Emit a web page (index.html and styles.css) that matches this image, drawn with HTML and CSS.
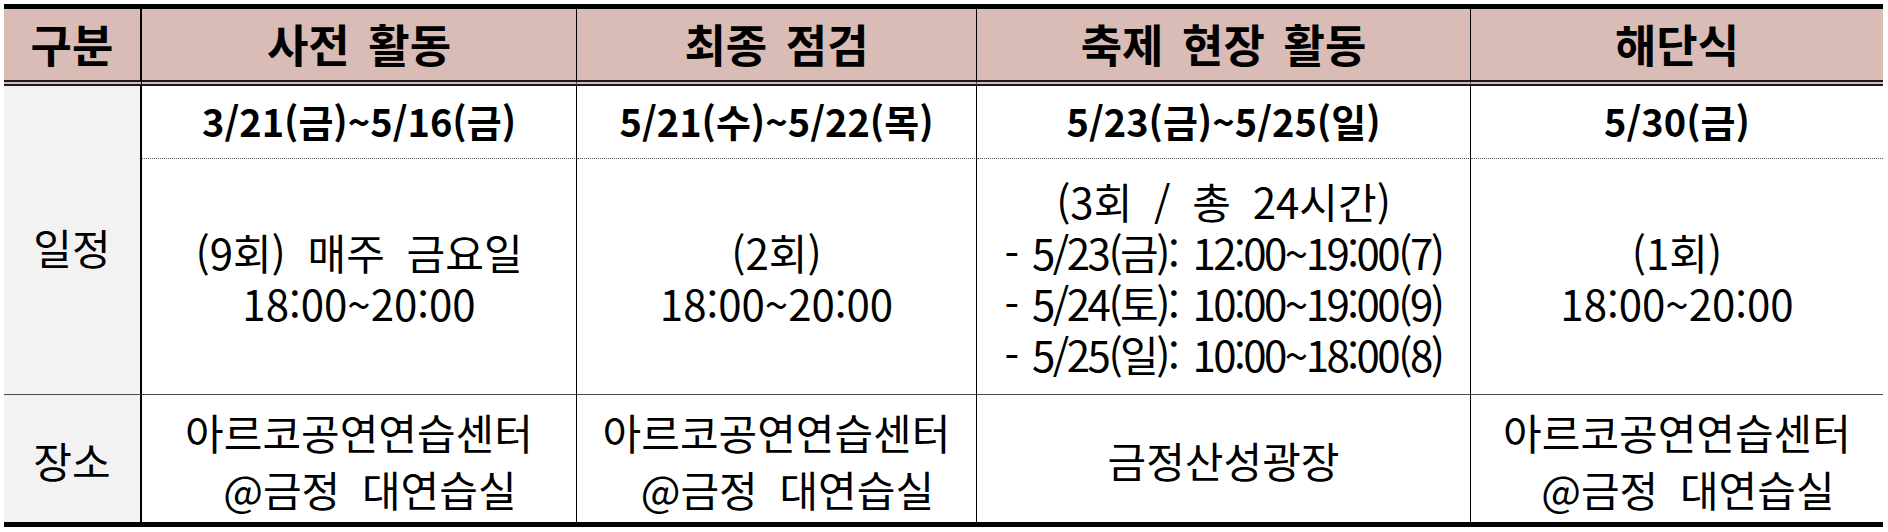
FILE: index.html
```html
<!DOCTYPE html>
<html lang="ko">
<head>
<meta charset="utf-8">
<title>일정</title>
<link rel="stylesheet" href="styles.css">
</head>
<body>
<div class="sched">
  <div class="cell head label">구분</div>
  <div class="cell head">사전 활동</div>
  <div class="cell head">최종 점검</div>
  <div class="cell head">축제 현장 활동</div>
  <div class="cell head last">해단식</div>

  <div class="cell side span2">일정</div>
  <div class="cell date">3/21(금)~5/16(금)</div>
  <div class="cell date">5/21(수)~5/22(목)</div>
  <div class="cell date">5/23(금)~5/25(일)</div>
  <div class="cell date last">5/30(금)</div>

  <div class="cell detail"><div class="txt">(9회) 매주 금요일<br>18:00~20:00</div></div>
  <div class="cell detail"><div class="txt">(2회)<br>18:00~20:00</div></div>
  <div class="cell detail"><div class="txt">(3회 / 총 24시간)<br><span class="tight">- 5/23(금): 12:00~19:00(7)</span><br><span class="tight">- 5/24(토): 10:00~19:00(9)</span><br><span class="tight">- 5/25(일): 10:00~18:00(8)</span></div></div>
  <div class="cell detail last"><div class="txt">(1회)<br>18:00~20:00</div></div>

  <div class="cell side place-side">장소</div>
  <div class="cell place"><div class="txt">아르코공연연습센터<br> @금정 대연습실</div></div>
  <div class="cell place"><div class="txt">아르코공연연습센터<br> @금정 대연습실</div></div>
  <div class="cell place"><div class="txt">금정산성광장</div></div>
  <div class="cell place last"><div class="txt">아르코공연연습센터<br> @금정 대연습실</div></div>
</div>
</body>
</html>
```

FILE: styles.css
```css
html, body {
  margin: 0;
  padding: 0;
  background: #ffffff;
}

body {
  padding: 4px;
  font-family: "Noto Sans CJK KR", "Noto Sans", sans-serif;
  color: #000;
}

.sched {
  display: grid;
  grid-template-columns: 138px 435px 400px 494px 412px;
  grid-template-rows: 77px 73px 236px 127px;
  width: 1879px;
  border-top: 5px solid #000;
  border-bottom: 5px solid #000;
}

.cell {
  box-sizing: border-box;
  display: flex;
  align-items: center;
  justify-content: center;
  text-align: center;
  font-size: 42px;
  line-height: 51px;
  word-spacing: 10px;
  white-space: pre-wrap;
  border-right: 1px solid #000;
}

.cell.last {
  border-right: none;
}

.cell.label,
.cell.side {
  border-right: 2px solid #000;
}

.head {
  background: #d8bcb5;
  font-size: 45px;
  font-weight: 700;
  word-spacing: 6px;
  border-bottom: 6px double #1c1c1c;
  padding-bottom: 2px;
}

.side {
  background: #f2f2f2;
  font-weight: 400;
}

.span2 {
  grid-row: span 2;
  border-bottom: 1px solid #4a4a4a;
  padding-top: 12px;
}

.date {
  font-size: 38px;
  font-weight: 700;
  word-spacing: 0;
  border-bottom: 1px dotted #555;
  padding-bottom: 4px;
}

.detail {
  border-bottom: 1px solid #4a4a4a;
}

.tight {
  letter-spacing: -2.5px;
  word-spacing: 6px;
}

.place,
.place-side {
  line-height: 57px;
  padding-top: 2px;
}

.txt {
  white-space: pre-wrap;
}
```
